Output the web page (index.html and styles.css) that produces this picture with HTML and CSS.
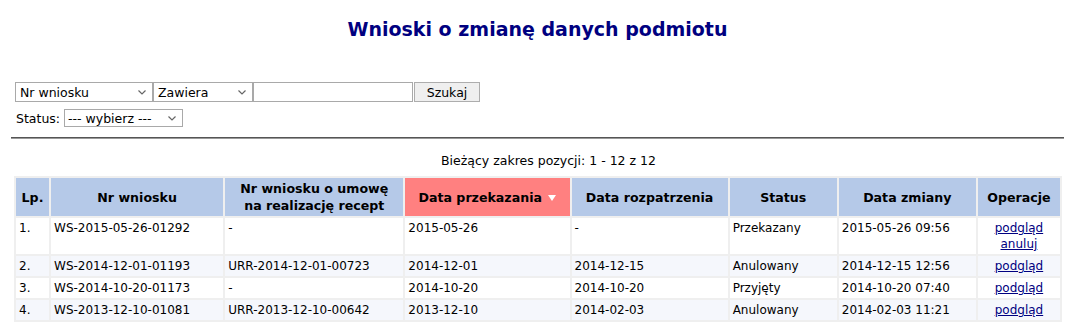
FILE: index.html
```html
<!DOCTYPE html>
<html lang="pl">
<head>
    <meta charset="UTF-8">
    <title>Wnioski o zmianę danych podmiotu</title>
    <link rel="stylesheet" href="styles.css">
</head>
<body>
    <div class="page">
        <h1 class="title">Wnioski o zmianę danych podmiotu</h1>

        <form class="search">
            <div class="search-row">
                <span class="select-box field-by">
                    <select><option>Nr wniosku</option></select>
                    <svg class="chevron" width="8" height="5" viewBox="0 0 8 5"><path d="M0.5 0.5 L4 4 L7.5 0.5" fill="none" stroke="#666" stroke-width="1.2"/></svg>
                </span>
                <span class="select-box field-mode">
                    <select><option>Zawiera</option></select>
                    <svg class="chevron" width="8" height="5" viewBox="0 0 8 5"><path d="M0.5 0.5 L4 4 L7.5 0.5" fill="none" stroke="#666" stroke-width="1.2"/></svg>
                </span>
                <input type="text" class="search-input">
                <button type="button" class="search-button">Szukaj</button>
            </div>
            <div class="status-row">
                <label>Status:</label>
                <span class="select-box field-status">
                    <select><option>--- wybierz ---</option></select>
                    <svg class="chevron" width="8" height="5" viewBox="0 0 8 5"><path d="M0.5 0.5 L4 4 L7.5 0.5" fill="none" stroke="#666" stroke-width="1.2"/></svg>
                </span>
            </div>
        </form>

        <hr class="divider">

        <div class="range">Bieżący zakres pozycji: 1 - 12 z 12</div>

        <table class="results">
            <thead>
                <tr>
                    <th class="col-lp">Lp.</th>
                    <th class="col-nr">Nr wniosku</th>
                    <th class="col-umowa">Nr wniosku o umowę<br>na realizację recept</th>
                    <th class="col-przek sorted">Data przekazania <svg class="sort-arrow" width="8" height="6" viewBox="0 0 8 6"><path d="M0 0 H8 L4 6 Z" fill="#fff"/></svg></th>
                    <th class="col-rozp">Data rozpatrzenia</th>
                    <th class="col-status">Status</th>
                    <th class="col-zmiana">Data zmiany</th>
                    <th class="col-op">Operacje</th>
                </tr>
            </thead>
            <tbody>
                <tr>
                    <td>1.</td>
                    <td>WS-2015-05-26-01292</td>
                    <td>-</td>
                    <td>2015-05-26</td>
                    <td>-</td>
                    <td>Przekazany</td>
                    <td>2015-05-26 09:56</td>
                    <td class="ops"><a href="#">podgląd</a><a href="#">anuluj</a></td>
                </tr>
                <tr>
                    <td>2.</td>
                    <td>WS-2014-12-01-01193</td>
                    <td>URR-2014-12-01-00723</td>
                    <td>2014-12-01</td>
                    <td>2014-12-15</td>
                    <td>Anulowany</td>
                    <td>2014-12-15 12:56</td>
                    <td class="ops"><a href="#">podgląd</a></td>
                </tr>
                <tr>
                    <td>3.</td>
                    <td>WS-2014-10-20-01173</td>
                    <td>-</td>
                    <td>2014-10-20</td>
                    <td>2014-10-20</td>
                    <td>Przyjęty</td>
                    <td>2014-10-20 07:40</td>
                    <td class="ops"><a href="#">podgląd</a></td>
                </tr>
                <tr>
                    <td>4.</td>
                    <td>WS-2013-12-10-01081</td>
                    <td>URR-2013-12-10-00642</td>
                    <td>2013-12-10</td>
                    <td>2014-02-03</td>
                    <td>Anulowany</td>
                    <td>2014-02-03 11:21</td>
                    <td class="ops"><a href="#">podgląd</a></td>
                </tr>
            </tbody>
        </table>
    </div>
</body>
</html>
```

FILE: styles.css
```css
/* Reset */
body, h1, form, table {
    margin: 0;
    padding: 0;
}

body {
    background: #fff;
    color: #000;
    font-family: "DejaVu Sans", Verdana, sans-serif;
    font-size: 12.5px;
    overflow: hidden;
}

.page {
    width: 1053px;
    padding-left: 11px;
}

/* Title */
.title {
    padding-top: 18px;
    text-align: center;
    font-size: 19px;
    line-height: 22px;
    font-weight: bold;
    color: #000080;
}

/* Search form */
.search {
    margin-top: 42px;
    padding-left: 4px;
}

.search-row {
    display: flex;
    align-items: center;
    height: 20px;
}

.status-row {
    display: flex;
    align-items: center;
    margin-top: 7px;
    height: 18px;
}

.status-row label {
    margin-left: 1px;
    margin-right: 4px;
}

.select-box {
    position: relative;
    display: inline-block;
}

.select-box select {
    appearance: none;
    -webkit-appearance: none;
    display: block;
    height: 20px;
    margin: 0;
    padding: 0 0 0 4px;
    border: 1px solid #a9a9a9;
    border-radius: 0;
    background: #fff;
    color: #000;
    font-family: inherit;
    font-size: 12.5px;
    outline: none;
}

.select-box .chevron {
    position: absolute;
    top: 8px;
    right: 7px;
    pointer-events: none;
}

.field-by select { width: 138px; }
.field-mode select { width: 100px; }
.field-status select {
    width: 119px;
    height: 18px;
    padding-left: 3px;
}
.field-status .chevron { top: 7px; }

.search-input {
    width: 160px;
    height: 20px;
    margin: 0;
    padding: 0 3px;
    box-sizing: border-box;
    border: 1px solid #a9a9a9;
    font-family: inherit;
    font-size: 12.5px;
    outline: none;
}

.search-button {
    width: 66px;
    height: 20px;
    margin-left: 1px;
    padding: 0;
    border: 1px solid #adadad;
    border-radius: 0;
    background: #efefef;
    color: #000;
    font-family: inherit;
    font-size: 12.5px;
}

/* Divider */
.divider {
    margin: 10px 0 0 0;
    height: 0;
    border: none;
    border-top: 1px solid #555;
    border-bottom: 1px solid #999;
}

/* Range info */
.range {
    margin-top: 14px;
    padding-left: 22px;
    text-align: center;
    line-height: 15px;
}

/* Results table */
.results {
    margin: 8px 0 0 3px;
    width: 1048px;
    border-spacing: 2px;
    background: #efefef;
    font-size: 12px;
}

.results th {
    padding: 2px 3px;
    background: #b5c9e8;
    font-size: 12.6px;
    font-weight: bold;
    line-height: 17px;
    text-align: center;
    vertical-align: middle;
}

.results th.sorted {
    background: #ff8080;
}

.sort-arrow {
    margin-left: 2px;
    vertical-align: 1px;
}

.col-lp { width: 27px; }
.col-nr { width: 166px; }
.col-umowa { width: 172px; }
.col-przek { width: 158px; }
.col-rozp { width: 150px; }
.col-status { width: 101px; }
.col-zmiana { width: 131px; }
.col-op { width: 76px; }

.results td {
    padding: 2px 3px;
    line-height: 16px;
    background: #fff;
    vertical-align: top;
    white-space: nowrap;
}

.results tbody tr:nth-child(even) td {
    background: #f5f7fc;
}

.results td.ops {
    text-align: center;
}

.ops a {
    display: block;
    color: #000080;
    text-decoration: underline;
}
```
